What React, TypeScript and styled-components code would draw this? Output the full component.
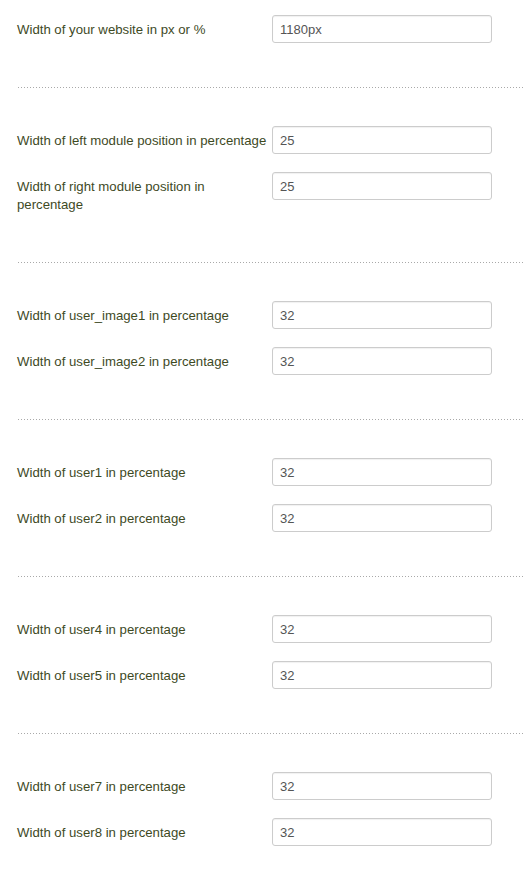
import React from "react";
import styled, { createGlobalStyle } from "styled-components";

const Global = createGlobalStyle`
  html, body { margin: 0; padding: 0; background: #fff; }
  body { font-family: "Helvetica Neue", "Liberation Sans", Arial, sans-serif; }
`;

const Page = styled.div`
  padding: 15px 0 0 17px;
  width: 506px;
`;

const Section = styled.div`
  display: flex;
  flex-direction: column;
  gap: 18px;
  padding-bottom: 44px;
`;

const Row = styled.div`
  display: flex;
  align-items: flex-start;
`;

const Label = styled.label<{ $tall?: boolean }>`
  box-sizing: border-box;
  width: 255px;
  flex: none;
  padding-top: 6px;
  padding-bottom: ${(p) => (p.$tall ? "4px" : "0")};
  font-size: 13.2px;
  line-height: 18px;
  color: #3e4a1f;
`;

const Input = styled.input`
  box-sizing: border-box;
  width: 220px;
  height: 28px;
  margin: 0;
  padding: 4px 7px;
  border: 1px solid #cccccc;
  border-radius: 3px;
  box-shadow: inset 0 1px 1px rgba(0, 0, 0, 0.06);
  font-family: inherit;
  font-size: 13px;
  color: #555;
  background: #fff;
  outline: none;
`;

const Divider = styled.div`
  height: 1px;
  margin: 0 0 38px 1px;
  background-image: linear-gradient(to right, #a9a9a9 1px, transparent 1px);
  background-size: 3px 1px;
  background-repeat: repeat-x;
`;

type Field = { label: string; value: string; tall?: boolean };

const sections: Field[][] = [
  [{ label: "Width of your website in px or %", value: "1180px" }],
  [
    { label: "Width of left module position in percentage", value: "25" },
    { label: "Width of right module position in percentage", value: "25", tall: true },
  ],
  [
    { label: "Width of user_image1 in percentage", value: "32" },
    { label: "Width of user_image2 in percentage", value: "32" },
  ],
  [
    { label: "Width of user1 in percentage", value: "32" },
    { label: "Width of user2 in percentage", value: "32" },
  ],
  [
    { label: "Width of user4 in percentage", value: "32" },
    { label: "Width of user5 in percentage", value: "32" },
  ],
  [
    { label: "Width of user7 in percentage", value: "32" },
    { label: "Width of user8 in percentage", value: "32" },
  ],
];

export default function App() {
  return (
    <>
      <Global />
      <Page>
        {sections.map((fields, i) => (
          <React.Fragment key={i}>
            <Section>
              {fields.map((f) => (
                <Row key={f.label}>
                  <Label $tall={f.tall}>{f.label}</Label>
                  <Input defaultValue={f.value} />
                </Row>
              ))}
            </Section>
            {i < sections.length - 1 && <Divider />}
          </React.Fragment>
        ))}
      </Page>
    </>
  );
}
